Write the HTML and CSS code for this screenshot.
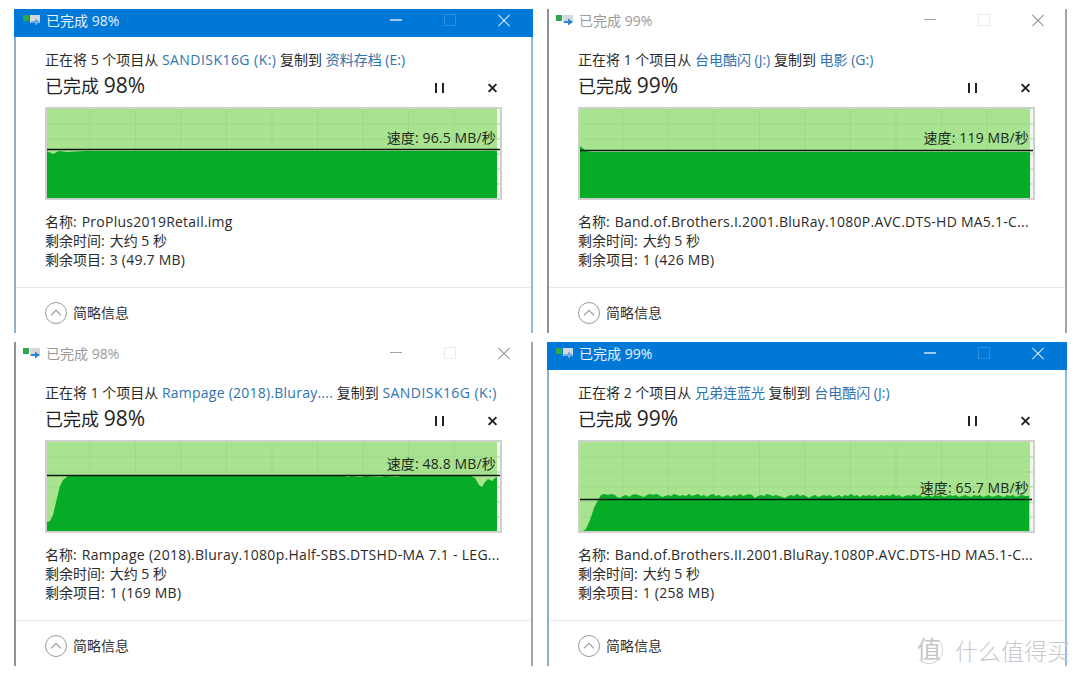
FILE: index.html
```html
<!DOCTYPE html>
<html lang="zh-CN">
<head>
    <meta charset="UTF-8">
    <title>复制进度</title>
    <link rel="stylesheet" href="styles.css">
</head>
<body>

<svg class="defs" width="0" height="0">
    <symbol id="copy-icon" viewBox="0 0 18 12">
        <rect x="0" y="1" width="6" height="6" fill="#2fa84a"/>
        <rect x="7" y="1" width="10" height="8" fill="#d5d8dc"/>
        <path d="M8 7h4V4.500L17 8l-5 3.500V9H8z" fill="var(--arrow)"/>
    </symbol>
    <symbol id="grid" viewBox="0 0 457 93">
        <path d="M45 0V93M90.500 0V93M136 0V93M181.500 0V93M227 0V93M272.500 0V93M318 0V93M363.500 0V93M409 0V93M0 17H457M0 32H457M0 47H457M0 62H457M0 77H457" stroke="#9bdb8b" stroke-width="1" fill="none"/>
    </symbol>
</svg>

<div class="desktop">

    <!-- 左上 -->
    <div class="window active">
        <div class="titlebar">
            <svg class="app-icon"><use href="#copy-icon"/></svg>
            <span class="title">已完成 98%</span>
            <span class="win-btn min"></span>
            <span class="win-btn max"></span>
            <span class="win-btn close"></span>
        </div>
        <div class="content">
            <div class="status">正在将 5 个项目从 <a class="caps">SANDISK16G (K:)</a> 复制到 <a>资料存档 (E:)</a></div>
            <div class="progress-row">
                <span class="percent">已完成 <span class="num">98%</span></span>
                <span class="pause"></span>
                <span class="cancel"></span>
            </div>
            <div class="chart">
                <svg class="graph" viewBox="0 0 457 93">
                    <rect class="strip" x="0" y="0" width="457" height="93"/>
                    <rect class="bg" x="0" y="0" width="452" height="93"/>
                    <use href="#grid" width="457" height="93"/>
                    <path class="fill" d="M2 91V44L8 47L14 44L22 45L40 44H452V91Z"/>
                    <path class="line" d="M2 42.500H455"/>
                </svg>
                <span class="speed speed-high">速度: 96.5 MB/秒</span>
            </div>
            <div class="details">
                <div>名称:<span class="value latin">ProPlus2019Retail.img</span></div>
                <div>剩余时间:<span class="value">大约 5 秒</span></div>
                <div>剩余项目:<span class="value latin">3 (49.7 MB)</span></div>
            </div>
        </div>
        <div class="footer">
            <span class="chevron"><svg viewBox="0 0 22 22"><path d="M5.500 13.500L11 8l5.500 5.500"/></svg></span>
            <span class="footer-label">简略信息</span>
        </div>
    </div>

    <!-- 右上 -->
    <div class="window">
        <div class="titlebar">
            <svg class="app-icon"><use href="#copy-icon"/></svg>
            <span class="title">已完成 99%</span>
            <span class="win-btn min"></span>
            <span class="win-btn max"></span>
            <span class="win-btn close"></span>
        </div>
        <div class="content">
            <div class="status">正在将 1 个项目从 <a>台电酷闪 (J:)</a> 复制到 <a>电影 (G:)</a></div>
            <div class="progress-row">
                <span class="percent">已完成 <span class="num">99%</span></span>
                <span class="pause"></span>
                <span class="cancel"></span>
            </div>
            <div class="chart">
                <svg class="graph" viewBox="0 0 457 93">
                    <rect class="strip" x="0" y="0" width="457" height="93"/>
                    <rect class="bg" x="0" y="0" width="452" height="93"/>
                    <use href="#grid" width="457" height="93"/>
                    <path class="fill" d="M2 91V39L8 44L14 45H452V91Z"/>
                    <path class="line" d="M2 43.500H455"/>
                </svg>
                <span class="speed speed-high">速度: 119 MB/秒</span>
            </div>
            <div class="details">
                <div>名称:<span class="value latin">Band.of.Brothers.I.2001.BluRay.1080P.AVC.DTS-HD MA5.1-C...</span></div>
                <div>剩余时间:<span class="value">大约 5 秒</span></div>
                <div>剩余项目:<span class="value latin">1 (426 MB)</span></div>
            </div>
        </div>
        <div class="footer">
            <span class="chevron"><svg viewBox="0 0 22 22"><path d="M5.500 13.500L11 8l5.500 5.500"/></svg></span>
            <span class="footer-label">简略信息</span>
        </div>
    </div>

    <!-- 左下 -->
    <div class="window">
        <div class="titlebar">
            <svg class="app-icon"><use href="#copy-icon"/></svg>
            <span class="title">已完成 98%</span>
            <span class="win-btn min"></span>
            <span class="win-btn max"></span>
            <span class="win-btn close"></span>
        </div>
        <div class="content">
            <div class="status">正在将 1 个项目从 <a class="latin">Rampage (2018).Bluray....</a> 复制到 <a class="caps">SANDISK16G (K:)</a></div>
            <div class="progress-row">
                <span class="percent">已完成 <span class="num">98%</span></span>
                <span class="pause"></span>
                <span class="cancel"></span>
            </div>
            <div class="chart">
                <svg class="graph" viewBox="0 0 457 93">
                    <rect class="strip" x="0" y="0" width="457" height="93"/>
                    <rect class="bg" x="0" y="0" width="452" height="93"/>
                    <use href="#grid" width="457" height="93"/>
                    <path class="fill" d="M2 91V82L5 81L8 75L12 58L15 46L18 40L23 36H300L303 37L306 36L316 37L320 36L336 37L340 36L352 37L356 36H426L430 38L434 45L437 47L440 42L443 39L447 41L450 38L452 37V91Z"/>
                    <path class="line" d="M2 35.500H457"/>
                </svg>
                <span class="speed speed-mid">速度: 48.8 MB/秒</span>
            </div>
            <div class="details">
                <div>名称:<span class="value latin wide">Rampage (2018).Bluray.1080p.Half-SBS.DTSHD-MA 7.1 - LEG...</span></div>
                <div>剩余时间:<span class="value">大约 5 秒</span></div>
                <div>剩余项目:<span class="value latin">1 (169 MB)</span></div>
            </div>
        </div>
        <div class="footer">
            <span class="chevron"><svg viewBox="0 0 22 22"><path d="M5.500 13.500L11 8l5.500 5.500"/></svg></span>
            <span class="footer-label">简略信息</span>
        </div>
    </div>

    <!-- 右下 -->
    <div class="window active">
        <div class="titlebar">
            <svg class="app-icon"><use href="#copy-icon"/></svg>
            <span class="title">已完成 99%</span>
            <span class="win-btn min"></span>
            <span class="win-btn max"></span>
            <span class="win-btn close"></span>
        </div>
        <div class="content">
            <div class="status">正在将 2 个项目从 <a>兄弟连蓝光</a> 复制到 <a>台电酷闪 (J:)</a></div>
            <div class="progress-row">
                <span class="percent">已完成 <span class="num">99%</span></span>
                <span class="pause"></span>
                <span class="cancel"></span>
            </div>
            <div class="chart">
                <svg class="graph" viewBox="0 0 457 93">
                    <rect class="strip" x="0" y="0" width="457" height="93"/>
                    <rect class="bg" x="0" y="0" width="452" height="93"/>
                    <use href="#grid" width="457" height="93"/>
                    <path class="fill" d="M5 91L8 89L12 80L16 68L20 60L23 55L26 54L30 55L33 54L37 55L39 57L42 58L45 56L48 55L51 57L54 55L57 54L60 55L63 56L66 57L69 55L72 54L75 55L78 54L81 55L84 57L87 56L90 55L93 56L96 54L99 55L102 56L105 55L108 56L111 54L114 56L117 55L120 54L123 56L126 55L129 57L132 55L135 54L138 56L141 55L144 57L147 56L150 55L153 57L156 55L159 56L162 54L165 56L168 55L171 54L174 55L177 58L180 56L183 55L186 56L189 54L192 55L195 56L198 55L201 56L204 57L207 58L210 56L213 55L216 56L219 54L222 56L225 55L228 56L231 58L234 56L237 55L240 57L243 56L246 55L249 56L252 55L255 57L258 56L261 55L264 57L267 55L270 56L273 54L276 56L279 55L282 57L285 55L288 56L291 55L294 56L297 55L300 57L303 55L306 56L309 55L312 56L315 54L318 56L321 55L324 57L327 56L330 55L333 56L336 54L339 56L342 55L345 57L348 56L351 55L354 57L357 55L360 56L363 55L366 57L369 56L372 55L375 56L378 55L381 57L384 56L387 55L390 56L393 57L396 55L399 56L402 55L405 57L408 56L411 55L414 57L417 56L420 55L423 56L426 57L429 55L432 56L435 55L438 57L441 56L444 55L447 56L451 56V91Z"/>
                    <path class="line" d="M2 59.500H454"/>
                </svg>
                <span class="speed speed-low">速度: 65.7 MB/秒</span>
            </div>
            <div class="details">
                <div>名称:<span class="value latin">Band.of.Brothers.II.2001.BluRay.1080P.AVC.DTS-HD MA5.1-C...</span></div>
                <div>剩余时间:<span class="value">大约 5 秒</span></div>
                <div>剩余项目:<span class="value latin">1 (258 MB)</span></div>
            </div>
        </div>
        <div class="footer">
            <span class="chevron"><svg viewBox="0 0 22 22"><path d="M5.500 13.500L11 8l5.500 5.500"/></svg></span>
            <span class="footer-label">简略信息</span>
        </div>
    </div>

</div>

<div class="watermark">
    <span class="mark">值</span>
    <span class="mark-text">什么值得买</span>
</div>

</body>
</html>
```

FILE: styles.css
```css
html, body {
    margin: 0;
    padding: 0;
}

body {
    width: 1080px;
    height: 675px;
    overflow: hidden;
    position: relative;
    background: white;
    font-family: "Open Sans", "Noto Sans CJK SC", sans-serif;
    font-size: 14px;
    color: #2b2b2b;
}

.defs {
    position: absolute;
}

.desktop {
    display: grid;
    grid-template-columns: 519px 520px;
    grid-template-rows: 324px 324px;
    column-gap: 14px;
    row-gap: 9px;
    padding: 9px 0 0 14px;
}

.window {
    --arrow: #2f86d8;
    background: white;
    border-left: 2px solid #8a9494;
    border-right: 2px solid #9aa6ac;
    display: flex;
    flex-direction: column;
    box-sizing: border-box;
}

.window.active {
    --arrow: #6aa9e2;
    border-left-color: #8fb2c9;
    border-right-color: #8fbce0;
}

.titlebar {
    height: 28px;
    box-sizing: border-box;
    padding-bottom: 6px;
    display: flex;
    align-items: center;
    flex-shrink: 0;
    color: #9a9a9a;
}

.active .titlebar {
    background: #0078d7;
    color: #e8f3fb;
    margin-left: -2px;
    margin-right: -2px;
    padding-left: 2px;
    padding-right: 2px;
}

.app-icon {
    width: 18px;
    height: 12px;
    margin-left: 7px;
}

.title {
    margin-left: 5px;
    flex: 1;
}

.win-btn {
    position: relative;
    width: 12px;
    height: 12px;
    display: block;
}

.min {
    margin-right: 42px;
}

.min::before {
    content: "";
    position: absolute;
    left: 0;
    right: 0;
    top: 5px;
    border-top: 1px solid #a8a8a8;
}

.active .min::before {
    border-top-color: #9dcbef;
    border-top-width: 2px;
}

.max {
    box-sizing: border-box;
    border: 1px solid #ececec;
    margin-right: 42px;
}

.active .max {
    border-color: #2a8fdf;
}

.close {
    margin-right: 21px;
}

.close::before,
.close::after {
    content: "";
    position: absolute;
    left: -2px;
    right: -2px;
    top: 5.500px;
    border-top: 1px solid #909090;
    transform: rotate(45deg);
}

.close::after {
    transform: rotate(-45deg);
}

.active .close::before,
.active .close::after {
    border-top-color: #dcecf9;
}

.content {
    padding: 13px 0 0 29px;
}

.status {
    height: 20px;
    line-height: 20px;
    white-space: nowrap;
}

.status a {
    color: #2f73b0;
}

.latin {
    letter-spacing: 0.24px;
}

.latin.wide {
    letter-spacing: 0.3px;
}

.caps {
    letter-spacing: 0.45px;
}

.progress-row {
    width: 457px;
    height: 23px;
    margin-top: 4px;
    display: flex;
    align-items: center;
}

.percent {
    font-size: 18px;
    color: #1e1e1e;
    flex: 1;
    margin-top: -2px;
}

.num {
    font-size: 21px;
}

.pause {
    width: 9px;
    height: 10px;
    box-sizing: border-box;
    border-left: 2.500px solid #222;
    border-right: 2.500px solid #222;
    margin-right: 44px;
    margin-top: 5px;
}

.cancel {
    position: relative;
    width: 9px;
    height: 10px;
    margin-right: 5px;
    margin-top: 5px;
}

.cancel::before,
.cancel::after {
    content: "";
    position: absolute;
    left: -1px;
    right: -1px;
    top: 4px;
    border-top: 2px solid #222;
    transform: rotate(45deg);
}

.cancel::after {
    transform: rotate(-45deg);
}

.chart {
    position: relative;
    width: 457px;
    height: 93px;
    margin-top: 10px;
    box-sizing: border-box;
}

.graph {
    display: block;
    width: 457px;
    height: 93px;
}

.strip {
    fill: #f4f8f2;
}

.bg {
    fill: #a8e38f;
}

.fill {
    fill: #06ab26;
}

.line {
    stroke: #0c140c;
    stroke-width: 1.500;
    fill: none;
}

.chart::after {
    content: "";
    position: absolute;
    inset: 0;
    border: 2px solid #ccd2ca;
    pointer-events: none;
}

.speed {
    position: absolute;
    right: 6px;
    line-height: 18px;
    color: #1e2a1e;
    letter-spacing: 0.15px;
    white-space: nowrap;
}

.speed-high {
    top: 22px;
}

.speed-mid {
    top: 15px;
}

.speed-low {
    top: 39px;
}

.details {
    margin-top: 12px;
    margin-bottom: 18px;
    line-height: 19px;
    white-space: nowrap;
}

.value {
    margin-left: 5px;
}

.footer {
    border-top: 1px solid #e8e8e8;
    padding: 14px 0 0 29px;
    display: flex;
    align-items: center;
    gap: 6px;
    color: #333;
}

.footer-label {
    margin-top: -2px;
}

.chevron {
    width: 22px;
    height: 22px;
    box-sizing: border-box;
    border: 1px solid #9a9a9a;
    border-radius: 50%;
    display: block;
}

.chevron svg {
    display: block;
    width: 20px;
    height: 20px;
    fill: none;
    stroke: #9a9a9a;
    stroke-width: 1.200;
}

.watermark {
    position: absolute;
    left: 915px;
    top: 635px;
    display: flex;
    align-items: center;
    gap: 12px;
    color: #c8c8c8;
    white-space: nowrap;
}

.mark {
    width: 28px;
    height: 28px;
    box-sizing: border-box;
    border: 1px solid #d4d4d4;
    border-top-color: transparent;
    border-left-color: transparent;
    border-radius: 50%;
    font-size: 24px;
    line-height: 24px;
    text-align: center;
    color: #c4c4c4;
}

.mark-text {
    font-size: 23px;
    font-weight: 300;
    line-height: 28px;
    margin-top: 2px;
}
```
